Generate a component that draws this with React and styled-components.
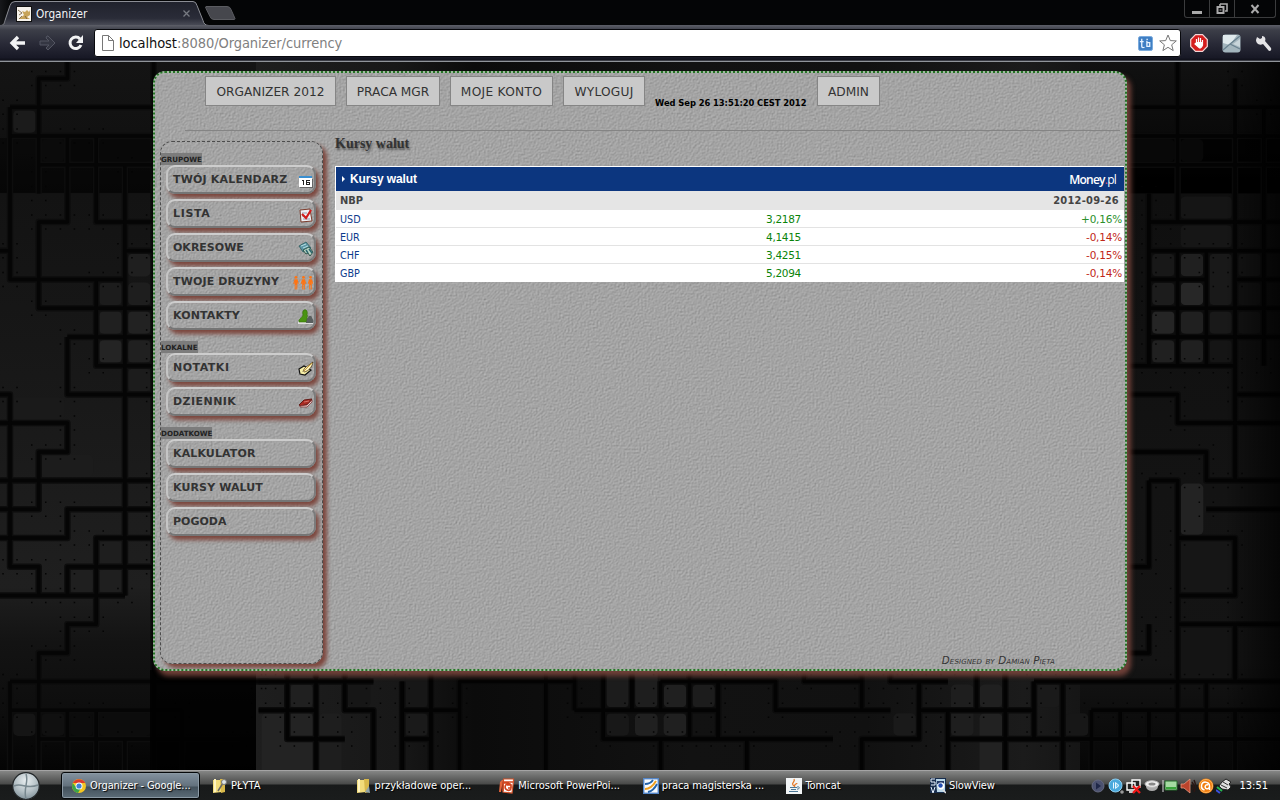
import React from 'react';
import styled, { createGlobalStyle } from 'styled-components';

const verdana = '"DejaVu Sans", Verdana, sans-serif';
const tahoma = '"DejaVu Sans Condensed", Tahoma, sans-serif';

const Global = createGlobalStyle`
  * { box-sizing: border-box; }
  body { margin: 0; background: #000; overflow: hidden; }
`;

const Screen = styled.div`
  display: flex;
  flex-direction: column;
  width: 1280px;
  height: 800px;
  overflow: hidden;
`;

/* ---------- browser chrome ---------- */

const TabStrip = styled.div`
  display: flex;
  justify-content: space-between;
  height: 25px;
  background: linear-gradient(90deg, #17181b 0, #040506 12px, #040506 100%);
`;
const TabArea = styled.div`
  display: grid;
  width: 240px;
  height: 26px;
  & > * { grid-area: 1 / 1; }
`;
const TabContent = styled.div`
  display: flex;
  align-items: center;
  height: 27px;
  padding-left: 16px;
  font: 11.7px ${tahoma};
  color: #f4f4f6;
`;
const TabTitle = styled.span`
  width: 146px;
  margin-left: 4px;
`;
const WindowButtons = styled.div`
  display: flex;
  height: 18px;
  margin-right: 4px;
  border: 1px solid #3b3c3d;
  border-top: 0;
  border-radius: 0 0 3px 3px;
`;
const WindowButton = styled.div`
  display: flex;
  align-items: center;
  justify-content: center;
  width: ${(p) => p.$w}px;
  border-right: ${(p) => (p.$last ? 0 : '1px solid #3b3c3d')};
`;
const Toolbar = styled.div`
  display: flex;
  align-items: center;
  height: 37px;
  padding: 0 8px 0 9px;
  background: linear-gradient(#5d5f68 0, #3c3e48 5px, #2b2c39 17px, #171825 33px, #11121c 34px);
  border-bottom: 1px solid #90949a;
  box-shadow: inset 0 -1px #3a3c44;
`;
const NavIcon = styled.svg`
  margin-right: ${(p) => p.$gap}px;
`;
const Omnibox = styled.div`
  display: flex;
  align-items: center;
  width: 1088px;
  height: 28px;
  padding: 0 3px 0 7px;
  background: #fff;
  border: 1px solid #08090d;
  border-radius: 3px;
  font: 14.5px ${tahoma};
  color: #808080;
`;
const Url = styled.div`
  flex: 1;
  margin-left: 5px;
  letter-spacing: -0.07px;
  b { font-weight: 400; color: #111; }
`;
const Extensions = styled.div`
  display: flex;
  align-items: center;
  margin-left: 9px;
`;

/* ---------- page ---------- */

const Viewport = styled.main`
  display: grid;
  height: 708px;
  overflow: hidden;
  & > * { grid-area: 1 / 1; }
`;
const Panel = styled.div`
  display: grid;
  width: 974px;
  height: 600px;
  margin: 9px 0 0 153px;
  overflow: hidden;
  border: 2px dotted #267326;
  border-radius: 12px;
  background: #a3b8a3;
`;
const PanelShadow = styled.div`
  width: 974px;
  height: 600px;
  margin: 9px 0 0 153px;
  border-radius: 12px;
  box-shadow: 4px 5px 5px #6f4038;
`;
const Texture = styled.svg`
  grid-area: 1 / 1;
`;
const PanelBody = styled.div`
  grid-area: 1 / 1;
  display: flex;
  flex-direction: column;
  z-index: 1;
`;
const Header = styled.header`
  display: flex;
  align-items: flex-start;
  gap: 10px;
  height: 58px;
  margin: 0 5px 0 30px;
  padding: 3px 0 0 20px;
  border-bottom: 1px solid #848484;
`;
const MenuItem = styled.a`
  width: ${(p) => p.$w}px;
  height: 30px;
  border: 1px solid #858585;
  background: #c9c9c9;
  color: #333;
  font: 12.200px/30px ${verdana};
  letter-spacing: ${(p) => p.$ls || 0}px;
  text-align: center;
  white-space: nowrap;
`;
const Clock = styled.span`
  width: 152px;
  padding-top: 21px;
  font: bold 8.400px/12px ${verdana};
  letter-spacing: -0.06px;
  color: #000;
  white-space: nowrap;
`;
const Columns = styled.div`
  display: flex;
  flex: 1;
`;
const Sidebar = styled.aside`
  width: 163px;
  height: 523px;
  margin: 10px 0 0 5px;
  padding-top: 11px;
  border: 1px dashed #4c4c4c;
  border-radius: 12px;
  box-shadow: 4px 4px 4px #7c463d;
`;
const Group = styled.section`
  margin-bottom: 11px;
`;
const GroupTitle = styled.h4`
  width: fit-content;
  height: 12px;
  margin: 0;
  background: #7c7c7c;
  color: #222;
  font: bold 7.100px/13px ${verdana};
`;
const SideButton = styled.a`
  display: flex;
  align-items: center;
  justify-content: space-between;
  width: 150px;
  height: 29px;
  margin: 0 0 5px 5px;
  padding: 0 0 0 5px;
  border: 2px solid;
  border-color: #cdcdcd #7b7b7b #757575 #c5c5c5;
  border-radius: 9px;
  box-shadow: 3px 4px 4px #7c463d;
  color: #333;
  font: bold 11px/15px ${verdana};
  white-space: nowrap;
`;
const SideLabel = styled.span`
  padding-bottom: 1px;
  letter-spacing: ${(p) => p.$ls}px;
`;
const SideIcon = styled.span`
  display: flex;
  padding-top: 3px;
`;
const Content = styled.section`
  display: flex;
  flex-direction: column;
  width: 789px;
  margin-left: 12px;
`;
const Title = styled.h1`
  height: 35px;
  margin: 0;
  padding-top: 4px;
  font: bold 14px/17px "Liberation Serif", serif;
  color: #333;
  text-shadow: 1px 2px 2px #555;
`;
const Rates = styled.div`
  border: 1px solid #fff;
  border-right-width: 0;
  background: #fff;
  font: 10.700px ${tahoma};
`;
const RatesHead = styled.div`
  display: flex;
  align-items: center;
  justify-content: space-between;
  height: 24px;
  padding: 0 8px 0 6px;
  background: #0c367f;
  color: #fff;
  font: bold 12px "Liberation Sans", sans-serif;
`;
const HeadTitle = styled.span`
  display: flex;
  align-items: center;
  gap: 4px;
  letter-spacing: -0.1px;
`;
const Money = styled.span`
  padding-top: 1px;
  font: 600 12px "Open Sans", sans-serif;
  letter-spacing: -0.750px;
  span { font-weight: 400; }
  i { color: #e0556a; font-style: normal; }
`;
const RatesDate = styled.div`
  display: flex;
  justify-content: space-between;
  height: 19px;
  padding: 0 5px 0 4px;
  background: #e5e5e5;
  color: #444;
  font: bold 11px/20px ${tahoma};
  span + span { letter-spacing: 0.250px; }
`;
const Rate = styled.div`
  display: grid;
  grid-template-columns: 389px 72px 1fr;
  height: 18px;
  padding: 0 2px 0 4px;
  border-top: 1px solid #e3e3e3;
  line-height: 19px;
  text-align: right;
  &:nth-child(3) { height: 17px; border-top: 0; }
`;
const Code = styled.span`
  text-align: left;
  color: #0c3b8c;
`;
const Value = styled.span`
  color: #0a830a;
  font-family: ${verdana};
  font-size: 10.500px;
  letter-spacing: -0.3px;
`;
const Change = styled.span`
  color: ${(p) => (p.$up ? '#2b8f2b' : '#bf2718')};
  font-family: ${verdana};
  font-size: 10.500px;
  letter-spacing: -0.2px;
`;
const Footer = styled.footer`
  margin: auto 69px 2px auto;
  font: italic 10.400px/14px ${verdana};
  font-variant: small-caps;
  letter-spacing: 0.120px;
  color: #333;
`;

/* ---------- taskbar ---------- */

const Taskbar = styled.footer`
  display: flex;
  align-items: center;
  height: 30px;
  padding-left: 11px;
  border-top: 1px solid #a4a4a4;
  background: linear-gradient(#858685 0, #686968 6px, #494a49 13px, #181a1a 14px, #1a1c1c 29px);
  color: #fff;
  font: 11px ${tahoma};
`;
const Tasks = styled.div`
  display: flex;
  flex: 1;
  margin-left: 20px;
`;
const Task = styled.div`
  display: flex;
  align-items: center;
  gap: 3px;
  width: ${(p) => (p.$active ? 139 : 143.600)}px;
  height: 27px;
  margin-right: ${(p) => (p.$active ? 2 : 0)}px;
  padding-left: 9px;
  border: 1px solid ${(p) => (p.$active ? '#05080a' : 'transparent')};
  border-radius: 3px;
  background: ${(p) => (p.$active ? 'linear-gradient(#8493a0, #63717d 13px, #43515b 14px, #5c6c78)' : 'none')};
  box-shadow: ${(p) => (p.$active ? 'inset 0 0 0 1px #8b99a4' : 'none')};
  white-space: nowrap;
`;
const TaskLabel = styled.span`
  letter-spacing: ${(p) => p.$ls ?? 0}px;
  text-shadow: 1px 1px 1px #000;
`;
const Tray = styled.div`
  display: flex;
  align-items: center;
  gap: 2px;
  padding-right: 12px;
`;
const Time = styled.span`
  margin-left: 5px;
`;

/* ---------- wallpaper ---------- */

const P = 28.72;
const leftLines = [
  [2, -1, 2, 0, 1, 0, 1, 4], [0, 1, 6, 1], [0, 1, 0, 7, 4, 7], [0, 2, 6, 2], [1, 3, 6, 3],
  [2, 2, 2, 5, 1, 5, 1, 8, 5, 8], [3, 2, 3, 5, 5, 5], [4, 3, 4, 18], [4, 6, 5, 6], [-1, 6, 0, 6],
  [3, 7, 3, 10, 5, 10], [2, 9, 5, 9], [2, 9, 2, 11, 5, 11], [-1, 11, 0, 11, 0, 17, 1, 17, 1, 18],
  [-1, 12, 2, 12, 2, 13, 1, 13, 1, 15, -1, 15], [-1, 14, 5, 14], [-1, 16, 2, 16, 2, 15, 5, 15],
  [-1, 18, 4, 18], [2, 18, 2, 17, 5, 17], [5, 16, 3, 16, 3, 19, 2, 19, 2, 20, 1, 20, 1, 25],
  [0, 21, 9, 21], [0, 21, 0, 25], [0, 22, 6, 22], [1, 23, 8, 23], [2, 22, 2, 25], [3, 22, 3, 25],
  [4, 23, 4, 25], [5, -1, 5, 25], [6, 22, 6, 25],
];
/* columns counted from x = 1034, rows shared with the left side */
const rightLines = [
  [3, 1, 9, 1], [3, 2, 9, 2], [3, 3, 9, 3], [4, 5, 9, 5], [4, 6, 7, 6], [7, 6, 9, 6],
  [4, 7, 6, 7], [7, 7, 9, 7], [4, 8, 9, 8], [4, 9, 9, 9], [3, 10, 7, 10], [7, 11, 9, 11], [3, 11, 5, 11, 5, 12, 9, 12],
  [4, 4, 4, 10], [5, -1, 5, 5], [5, 6, 5, 10], [6, 6, 6, 10], [7, 0, 7, 14], [8, 1, 8, 10],
  [3, 13, 6, 13, 6, 14, 9, 14], [4, 14, 5, 14, 5, 19, 9, 19], [4, 14, 4, 17, 3, 17], [6, 15, 9, 15, 9, 16],
  [5, 16, 7, 16, 7, 18, 5, 18], [4, 19, 4, 20, 3, 20], [5, 21, 5, 19, 7, 19, 7, 21],
  [0, 21, 9, 21], [0, 21, 0, 23, 9, 23], [1, 21, 1, 25], [2, 22, 9, 22], [2, 22, 2, 25],
  [3, 22, 3, 25], [5, 21, 5, 25], [6, 21, 6, 25], [4, 22, 4, 25], [7, 22, 7, 25],
  [0, 22, -4, 22, -4, 21, -5, 21, -5, 20], [-1, 20, -1, 25], [-2, 20, -2, 22], [-3, 22, -3, 23, 1, 23],
  [-4, 22, -4, 23, -6, 23, -6, 25], [-3, 22, -3, 25], [-5, 21, -3, 21], [-6, 20, -6, 22, -5, 22],
  [-8, 20, -8, 21, -6, 21], [-13, 21, -9, 21, -9, 22, -6, 22], [-11, 21, -11, 23], [-12, 20, -12, 23],
  [-13, 21, -13, 22], [-14, 20, -14, 22], [-15, 20, -15, 23, -7, 23], [-16, 22, -11, 22],
  [-17, 20, -17, 25], [-16, 20, -16, 22], [-10, 23, -10, 25], [-13, 23, -13, 25],
  [-20, 25, -20, 21, -16, 21], [-21, 20, -21, 25], [-22, 21, -22, 25], [-24, 20, -24, 22, -23, 22, -23, 25],
  [-25, 20, -25, 25], [-26, 20, -26, 22], [-27, 21, -23, 21], [-22, 22, -20, 22], [-27, 22, -25, 22],
  [-26, 22, -26, 23, -24, 23], [-22, 23, -21, 23],
];
const toPath = (ox) => (pts) => {
  let d = '';
  for (let i = 0; i < pts.length; i += 2) {
    d += `${i ? 'L' : 'M'}${(ox + pts[i] * P).toFixed(1)} ${(16.5 + pts[i + 1] * P).toFixed(1)}`;
  }
  return d;
};
/* rivets sit on the four sides of every bend or line end */
const toRivets = (ox) => (pts) => {
  let d = '';
  for (let i = 0; i < pts.length; i += 2) {
    const x = ox + pts[i] * P;
    const y = 16.5 + pts[i + 1] * P;
    [[-7, -7], [7, -7], [-7, 7], [7, 7]].forEach(([dx, dy]) => {
      d += `M${(x + dx - 0.7).toFixed(1)} ${(y + dy).toFixed(1)}h1.5`;
    });
  }
  return d;
};
const leftPath = leftLines.map(toPath(10)).join('');
const rightPath = rightLines.map(toPath(1034)).join('');
const rivets = leftLines.map(toRivets(10)).join('') + rightLines.map(toRivets(1034)).join('');

const cell = (ox, c, r, w, h, fill) => (
  <rect key={`${ox}-${c}-${r}`} x={ox + c * P + 3} y={16.5 + r * P + 3} width={w * P - 6} height={h * P - 6} rx="5" fill={fill} />
);
const leftCells = [
  [0, 1, 1, 1, '#1b1b1b'], [1, 2, 1, 1, '#131313'], [2, 2, 1, 1, '#0d0d0d'], [3, 2, 2, 1, '#0e0e0e'],
  [4, 6, 1, 1, '#1f1f1f'], [3, 7, 1, 1, '#1c1c1c'], [4, 7, 1, 1, '#1e1e1e'], [3, 8, 1, 1, '#202020'], [4, 8, 1, 1, '#222'],
  [3, 9, 1, 1, '#242424'], [4, 9, 1, 1, '#202020'], [4, 10, 1, 1, '#1c1c1c'],
  [0, 11, 2, 1, '#1a1a1a'], [1, 13, 2, 1, '#1c1c1c'], [2, 17, 1, 1, '#1f1f1f'], [3, 17, 1, 1, '#1f1f1f'], [3, 16, 1, 1, '#1e1e1e'],
  [0, 22, 1, 1, '#151515'], [1, 22, 1, 1, '#101010'], [2, 22, 1, 1, '#0c0c0c'], [3, 22, 2, 1, '#0c0c0c'],
];
const rightCells = [
  [3, 2, 2, 1, '#1c1c1c'], [5, 2, 1, 1, '#1c1c1c'], [5, 5, 2, 1, '#161616'], [5, 4, 2, 1, '#151515'],
  [4, 6, 1, 1, '#181818'], [5, 6, 1, 1, '#202020'], [6, 6, 1, 2, '#191919'], [7, 6, 1, 1, '#151515'],
  [4, 7, 1, 1, '#1c1c1c'], [5, 7, 1, 1, '#272727'], [7, 7, 1, 1, '#131313'], [4, 8, 1, 1, '#252525'], [5, 8, 1, 1, '#202020'],
  [6, 8, 1, 1, '#191919'], [7, 8, 1, 1, '#141414'], [4, 9, 1, 1, '#202020'], [5, 9, 1, 1, '#202020'], [6, 9, 1, 1, '#151515'],
  [5, 14, 1, 2, '#232323'], [5, 16, 2, 2, '#161616'], [5, 19, 2, 2, '#141414'],
  [0, 21, 1, 1, '#1a1a1a'], [1, 22, 1, 1, '#171717'], [-2, 21, 1, 1, '#202020'], [-2, 22, 1, 3, '#222'],
  [-3, 21, 1, 2, '#1e1e1e'], [-5, 22, 1, 1, '#1a1a1a'], [-12, 21, 1, 1, '#1c1c1c'], [-13, 21, 1, 1, '#202020'],
  [-13, 22, 1, 1, '#202020'], [-14, 22, 1, 1, '#202020'], [-15, 22, 1, 1, '#181818'], [-14, 20, 1, 2, '#1e1e1e'],
  [-15, 20, 1, 2, '#1c1c1c'], [-24, 20, 1, 2, '#161616'], [-26, 21, 1, 1, '#202020'], [-26, 22, 1, 1, '#262626'],
  [-25, 22, 1, 3, '#1e1e1e'], [-27, 22, 2, 3, '#232323'], [-22, 20, 1, 2, '#171717'], [-22, 22, 1, 1, '#1a1a1a'],
];

const Wallpaper = () => (
  <svg width="1280" height="708" viewBox="0 0 1280 708">
    <defs>
      <linearGradient id="lg" x1="0" y1="0" x2="0" y2="1">
        <stop offset="0" stopColor="#141414" /><stop offset=".1" stopColor="#111" /><stop offset=".184" stopColor="#0b0b0b" />
        <stop offset=".186" stopColor="#131313" /><stop offset=".4" stopColor="#171717" /><stop offset=".74" stopColor="#1f1f1f" />
        <stop offset=".82" stopColor="#131313" /><stop offset=".92" stopColor="#0d0d0d" /><stop offset="1" stopColor="#040404" />
      </linearGradient>
      <linearGradient id="rg" x1="0" y1="0" x2="0" y2="1">
        <stop offset="0" stopColor="#111" /><stop offset=".1" stopColor="#0a0a0a" /><stop offset=".184" stopColor="#010101" />
        <stop offset=".187" stopColor="#0f0f0f" /><stop offset=".6" stopColor="#131313" /><stop offset=".85" stopColor="#141414" />
        <stop offset="1" stopColor="#060606" />
      </linearGradient>
      <linearGradient id="bg" x1="0" x2="1" y1="0" y2="0">
        <stop offset="0" stopColor="#1e1e1e" /><stop offset=".16" stopColor="#181818" /><stop offset=".25" stopColor="#0b0b0b" />
        <stop offset=".5" stopColor="#121212" /><stop offset=".7" stopColor="#111" /><stop offset=".88" stopColor="#1b1b1b" /><stop offset="1" stopColor="#111" />
      </linearGradient>
      <linearGradient id="fade" x1="0" x2="1" y1="0" y2="0">
        <stop offset="0" stopOpacity="0" /><stop offset="1" stopOpacity=".7" />
      </linearGradient>
    </defs>
    <rect width="256" height="708" fill="url(#lg)" />
    <rect x="256" width="872" height="708" fill="url(#bg)" />
    <rect x="1080" width="200" height="708" fill="url(#rg)" />
    {leftCells.map((c) => cell(10, ...c))}
    {rightCells.map((c) => cell(1034, ...c))}
    <rect y="76" width="153" height="55" fill="#000" opacity=".4" />
    <rect x="1120" y="76" width="160" height="55" fill="#000" opacity=".7" />
    <g fill="none" strokeLinejoin="round">
      <path d={rivets} stroke="#040404" strokeWidth="1.5" />
      <path d={leftPath} stroke="#0d0d0d" strokeWidth="6.5" />
      <path d={leftPath} stroke="#050505" strokeWidth="3.5" />
      <path d={rightPath} stroke="#0b0b0b" strokeWidth="6.5" />
      <path d={rightPath} stroke="#030303" strokeWidth="3.5" />
    </g>
    <rect x="150" y="608" width="106" height="100" fill="#000" opacity=".8" />
    <rect x="1225" width="55" height="708" fill="url(#fade)" />
  </svg>
);

/* ---------- icons ---------- */

const CatIcon = () => (
  <svg width="16" height="16" viewBox="0 0 16 16">
    <rect width="16" height="16" fill="#111" /><rect x="1" y="1" width="14" height="14" fill="#f7f3ec" />
    <path d="M3 13 8 9 6 5l3 1 2-2 2 2 1-2v5l-3 2 3 2z" fill="#c8a45a" />
    <path d="M2 4l4 3-3 2M6 10l-3 3M9 10l2 3" stroke="#6e5535" strokeWidth=".8" fill="none" />
  </svg>
);
const CalendarIcon = () => (
  <svg width="16" height="16" viewBox="0 0 16 16" shapeRendering="crispEdges">
    <path d="M2 6h13v9H2z" fill="#666" /><path d="M1 4h13v10H1z" fill="#fff" />
    <path d="M1 3h13v2H1z" fill="#3a8fd0" />
    <path d="M5.500 7v5M4 7.500h1M12 7.500H8.500v4H11.500V9.500H9" stroke="#222" fill="none" />
  </svg>
);
const ListIcon = () => (
  <svg width="16" height="16" viewBox="0 0 16 16">
    <path d="m2 3 10-1 2 12-11 1z" fill="#eef0f5" stroke="#7c3b2b" /><path d="M4 6h5M4 9h3M5 12h7" stroke="#99a" />
    <path d="m4 7 4 4 5-8" fill="none" stroke="#d01c1c" strokeWidth="2.2" />
  </svg>
);
const PeriodIcon = () => (
  <svg width="16" height="16" viewBox="0 0 16 16">
    <path d="m1 5 7-4 5 6-8 4z" fill="#5d96a6" stroke="#255" strokeWidth=".7" /><path d="m3 5 5-2M5 7l5-2" stroke="#b5dee0" />
    <path d="m5 9 6-3 4 5-3 4-2-3-2 1z" fill="#b8d4c4" stroke="#143d33" strokeWidth=".8" /><path d="m8 9 2 3m1-4 3 4" stroke="#2d6770" strokeWidth="1.5" />
  </svg>
);
const Person = ({ x }) => (
  <g transform={`translate(${x} 0)`}>
    <circle cx="3" cy="2.3" r="1.4" /><path d="M1.500 4.200h3l1.200 4.600-.8.300-.6-2v7.400H3.300V10h-.6v4.500h-1V7.100l-.6 2-.8-.3z" />
  </g>
);
const TeamIcon = () => (
  <svg width="21" height="16" viewBox="0 0 21 16" fill="#ff7413"><Person x={0} /><Person x={7.5} /><Person x={14.5} /></svg>
);
const ContactsIcon = () => (
  <svg width="16" height="18" viewBox="0 0 16 18">
    <path d="M0 13h15v3H0z" fill="#dedede" /><path d="M8 15c0-4 1-5 2-5 0-3 4-3 4 0 1 1 2 3 1 5z" fill="#5a5f5f" />
    <path d="M1 14c-1-3 3-4 4-7-2-7 6-7 4 0 1 0 0 2 0 3l-1 4z" fill="#4a9411" stroke="#326f08" strokeWidth=".6" />
  </svg>
);
const NotesIcon = () => (
  <svg width="16" height="16" viewBox="0 0 16 16">
    <path d="m1 8 5-3 7 4-6 5-5-1z" fill="#f8f0a8" stroke="#111" strokeWidth="1.2" />
    <path d="M5 11c1-5 5-6 10-10-1 5-4 9-9 10" fill="#fff4c0" stroke="#3b2200" strokeWidth=".7" /><path d="m6 10 8-8" stroke="#c9a038" />
  </svg>
);
const DiaryIcon = () => (
  <svg width="16" height="16" viewBox="0 0 16 16">
    <path d="M1 10 6 5l8-1-4 5-7 2z" fill="#a92b22" stroke="#641b18" /><path d="m2 11 7-1 5-5v2l-5 5-7 0z" fill="#e4cdcd" stroke="#7c2a26" strokeWidth=".7" /><path d="m6 7 5-1" stroke="#d77066" />
  </svg>
);
const FolderIcon = ({ tool }) => (
  <svg width="16" height="16" viewBox="0 0 16 16">
    <path d="M1 2h8l1 12-9 1z" fill="#f2dc7b" /><path d="M8 1h5v13l-4 1z" fill="#d9b94b" /><path d="M3 1v13" stroke="#fff4bf" strokeWidth="2" />
    {tool ? <><path d="m6 13 5-8" stroke="#666" strokeWidth="1.5" /><circle cx="12" cy="4" r="2.5" fill="#dde4e8" stroke="#777" /></> : <path d="M13 8l1 7-5-1z" fill="#8fa2a8" />}
  </svg>
);
const ChromeIcon = () => (
  <svg width="16" height="16" viewBox="0 0 16 16">
    <circle cx="8" cy="8" r="7" fill="#f4c522" /><path d="M1.8 5a7 7 0 0 1 12.5 0H8z" fill="#dc3d2e" /><path d="M1.8 5A7 7 0 0 0 7 15l3.5-6L4 8z" fill="#3da548" />
    <circle cx="8" cy="8" r="3.5" fill="#fff" /><circle cx="8" cy="8" r="2.6" fill="#4182d6" />
  </svg>
);
const PptIcon = () => (
  <svg width="16" height="16" viewBox="0 0 16 16">
    <path d="M4.5 1h10v2L13 15l-9-1z" fill="#fff" stroke="#d4542b" strokeWidth="1.2" /><path d="M1 4l2-2h1L2 14H0z" fill="#e4633a" />
    <path d="M4 4h10M4 13V5h6" stroke="#d2451e" fill="none" strokeWidth="1.3" /><path d="M12 7a3.3 3.3 0 1 0 0 4M8 7h4v3H9" fill="none" stroke="#d2451e" strokeWidth="1.7" />
  </svg>
);
const WriterIcon = () => (
  <svg width="16" height="16" viewBox="0 0 16 16">
    <rect x=".7" y=".7" width="14.6" height="14.6" fill="#f7fbff" stroke="#5486c8" strokeWidth="1.4" />
    <path d="M2 6c4 0 6-1 8-4M5 14c5-1 7-4 9-8" stroke="#2462a9" strokeWidth="1.8" fill="none" /><path d="M2 11c5 0 8-3 11-8" stroke="#f0a020" strokeWidth="2" fill="none" />
  </svg>
);
const JavaIcon = () => (
  <svg width="16" height="16" viewBox="0 0 16 16">
    <rect width="16" height="16" fill="#f1f4f5" /><path d="M8 8c-4-3 2-4 0-7m1 8c-2-2 2-3 2-4" stroke="#e57928" fill="none" strokeWidth="1.3" />
    <path d="M4 9.5h7M5 11.5h5M3 13.5h9M11 9c4-1 2 3 0 2" stroke="#4c7795" fill="none" />
  </svg>
);
const SlowIcon = () => (
  <svg width="16" height="16" viewBox="0 0 16 16">
    <rect width="16" height="15" fill="#182d4d" /><path d="M5 1H1v3h4v3H1M1 9l2 6 2-6" stroke="#e7f2ff" fill="none" />
    <path d="M6 1h9v13H7z" fill="#b9d6e8" /><path d="M7 3h7v3H7z" fill="#243a68" /><circle cx="11" cy="8" r="3.4" fill="#fff" /><circle cx="10.5" cy="7.5" r="2.2" fill="#244eb0" /><path d="m13 12 3 3" stroke="#ddd" strokeWidth="1.5" />
  </svg>
);

const TrayIcons = () => (
  <>
    <svg width="16" height="16" viewBox="0 0 16 16"><circle cx="8" cy="8" r="6" fill="#4c5270" stroke="#656980" /><path d="m6 4.5 5 3.500-5 3.500z" fill="#1f2748" /></svg>
    <svg width="16" height="16" viewBox="0 0 16 16"><circle cx="7.5" cy="7.5" r="6.5" fill="#4aa9dc" stroke="#8fd0f2" /><path d="M5.500 4.500v6M7.500 4.500l3.500 3-3.500 3z" stroke="#e8f7ff" fill="#7cc9ee" /><circle cx="14" cy="14" r="1.8" fill="#999" /></svg>
    <svg width="16" height="16" viewBox="0 0 16 16"><path d="M6 2h8v7H6zM1 5h8v7H1zM3 14h5" fill="#222" stroke="#fff" strokeWidth="1.4" /><path d="m7 8 7 7m0-7-7 7" stroke="#f01818" strokeWidth="2.4" /></svg>
    <svg width="16" height="16" viewBox="0 0 16 16"><ellipse cx="8" cy="8.5" rx="6" ry="4.5" fill="#aaa" /><ellipse cx="8" cy="6" rx="7" ry="3.3" fill="#eee" stroke="#bbb" /><ellipse cx="8" cy="6" rx="3.5" ry="1.5" fill="#888" /></svg>
    <svg width="16" height="16" viewBox="0 0 16 16"><path d="M1 2v12" stroke="#ddd" /><path d="M3 3h12v9H3z" fill="#a5dba2" stroke="#276b2c" /><path d="M4 9h10v2H4z" fill="#38a53a" /></svg>
    <svg width="16" height="16" viewBox="0 0 16 16"><path d="M1 6h3l6-5v14l-6-5H1z" fill="#ba432c" stroke="#e7977c" strokeWidth=".8" /><path d="M12 4q3 4 0 8m2-10q3 6 0 12" fill="none" stroke="#2a1714" strokeWidth="1.5" /></svg>
    <svg width="16" height="16" viewBox="0 0 16 16"><circle cx="8" cy="8" r="7.5" fill="#f07d10" /><circle cx="8" cy="8" r="6.5" fill="none" stroke="#ffb860" /><path d="M6.500 12a4 4 0 1 1 5-4v4M11 9.500a2 2 0 1 1-1-2.500" fill="none" stroke="#fff" strokeWidth="1.5" /></svg>
    <svg width="16" height="16" viewBox="0 0 16 16"><path d="m6 4 4-3 5 3-2 2 2 3-3 3-6-1-3-3z" fill="#ddd" stroke="#222" strokeWidth="1" /><path d="m7 4 5 3m-7 0 6 3" stroke="#333" /><path d="m1 9 5 4" stroke="#28b653" strokeWidth="2" /><path d="m0 12 4 3" stroke="#3a50e0" strokeWidth="2" /></svg>
  </>
);

const Orb = () => (
  <svg width="30" height="28" viewBox="0 0 30 28">
    <defs><radialGradient id="orb" cx=".5" cy=".3" r=".7"><stop offset="0" stopColor="#e8eef0" /><stop offset=".6" stopColor="#b4c0c5" /><stop offset="1" stopColor="#84949c" /></radialGradient></defs>
    <circle cx="15" cy="14" r="13.3" fill="url(#orb)" stroke="#222628" strokeWidth="1.3" />
    <path d="M3 14c8-4 12 4 24-1M15 2c3 8-3 14 0 25" fill="none" stroke="#78888f" strokeWidth="1.5" />
  </svg>
);

const sections = [
  {
    title: 'GRUPOWE',
    items: [
      ['TWÓJ KALENDARZ', 0.19, CalendarIcon], ['LISTA', 0.65, ListIcon], ['OKRESOWE', 0, PeriodIcon],
      ['TWOJE DRUZYNY', 0.15, TeamIcon], ['KONTAKTY', 0.15, ContactsIcon],
    ],
  },
  { title: 'LOKALNE', items: [['NOTATKI', 0.5, NotesIcon], ['DZIENNIK', 0.45, DiaryIcon]] },
  { title: 'DODATKOWE', items: [['KALKULATOR', 0.12], ['KURSY WALUT', 0.12], ['POGODA', 0]] },
];
const rates = [['USD', '3,2187', '+0,16%'], ['EUR', '4,1415', '-0,14%'], ['CHF', '3,4251', '-0,15%'], ['GBP', '5,2094', '-0,14%']];

const StoneTexture = () => (
  <Texture width="970" height="596">
    <filter id="stone" x="0" y="0" width="100%" height="100%" colorInterpolationFilters="sRGB">
      <feTurbulence type="fractalNoise" baseFrequency="0.56" numOctaves="2" seed="7" result="n" />
      <feDiffuseLighting in="n" surfaceScale="0.4" diffuseConstant="0.775" lightingColor="#ffffff">
        <feDistantLight azimuth="225" elevation="56" />
      </feDiffuseLighting>
    </filter>
    <rect width="970" height="596" filter="url(#stone)" />
  </Texture>
);

export default function App() {
  return (
    <Screen>
      <Global />
      <TabStrip>
        <TabArea>
          <svg width="240" height="26" viewBox="0 0 240 26">
            <defs><linearGradient id="tab" x1="0" y1="0" x2="0" y2="1"><stop offset="0" stopColor="#20222c" /><stop offset=".7" stopColor="#2a2c38" /><stop offset="1" stopColor="#4b4d58" /></linearGradient></defs>
            <path d="M0 25.500c4 0 4-2 5-5l5-15q1-4 5-4h178q3 0 4 4l6 15q1 5 6 5z" fill="url(#tab)" />
            <path d="M0 25.500c4 0 4-2 5-5l5-15q1-4 5-4h178q3 0 4 4l6 15q1 5 6 5" fill="none" stroke="#8b8d94" />
            <path d="M206 6.500h21q3 0 4 3l4 9q0 1-1 1h-20q-3 0-4-3l-4-8q-1-2 0-2z" fill="#46474d" stroke="#5b5c61" />
          </svg>
          <TabContent>
            <CatIcon />
            <TabTitle>Organizer</TabTitle>
            <svg width="9" height="9" viewBox="0 0 9 9"><path d="m1.5 1.5 6 6m0-6-6 6" stroke="#777a82" strokeWidth="1.3" /></svg>
          </TabContent>
        </TabArea>
        <WindowButtons>
          <WindowButton $w={25}><svg width="10" height="12"><path d="M0 9.5h10" stroke="#aaa" strokeWidth="3" /></svg></WindowButton>
          <WindowButton $w={25}><svg width="12" height="12" viewBox="0 0 12 12" fill="none" stroke="#aaa"><path d="M4 1h7v7H9M4 1v2" strokeWidth="1.6" /><path d="M1.5 4h6v6h-6z" strokeWidth="2" /><path d="M3.500 7h2" /></svg></WindowButton>
          <WindowButton $w={40} $last><svg width="10" height="10" viewBox="0 0 10 10"><path d="m1.5 1 7 8m0-8-7 8" stroke="#aaa" strokeWidth="2" /></svg></WindowButton>
        </WindowButtons>
      </TabStrip>

      <Toolbar>
        <NavIcon $gap={13} width="17" height="16" viewBox="0 0 17 16"><path d="M9 2 3 8l6 6M3 8h13" fill="none" stroke="#f2f3f4" strokeWidth="3.3" /></NavIcon>
        <NavIcon $gap={12} width="17" height="16" viewBox="0 0 17 16"><path d="m8 1-1 2 3 3H1v4h9l-3 3 2 2 7-7-7-7z" fill="#343642" stroke="#555763" /></NavIcon>
        <NavIcon $gap={10} width="16" height="17" viewBox="0 0 16 17"><path d="M13 10a5.700 5.700 0 1 1-1-6" fill="none" stroke="#f2f3f4" strokeWidth="3" /><path d="M15 0v8H8z" fill="#f2f3f4" /></NavIcon>
        <Omnibox>
          <svg width="12" height="16" viewBox="0 0 12 16"><path d="M.5.5h6l5 5v10H.5zM6.500.5v5h5" fill="#fff" stroke="#777" /></svg>
          <Url><b>localhost</b>:8080/Organizer/currency</Url>
          <NavIcon $gap={5} width="15" height="15" viewBox="0 0 16 16"><rect x=".5" y=".5" width="15" height="15" rx="2" fill="#3f7fc4" stroke="#77a9dc" /><path d="M4 3v8q0 2 3 1M2 6h4M9 3.500h1.500M9.500 7h3v4h-3zV5" fill="none" stroke="#e6f2ff" strokeWidth="1.4" /></NavIcon>
          <svg width="19" height="18" viewBox="0 0 19 18"><path d="m10 1 2.300 5.600 6 .3-4.600 3.900 1.500 5.800-5.200-3.300-5.100 3.300 1.500-5.800L1.700 6.900l6-.3z" fill="#fff" stroke="#777" /></svg>
        </Omnibox>
        <Extensions>
          <NavIcon $gap={14} width="18" height="18" viewBox="0 0 18 18"><path d="M5.500.7h7l4.800 4.800v7l-4.800 4.800h-7L.7 12.500v-7z" fill="#d51d1d" stroke="#f5d5d5" strokeWidth="1.2" /><path d="M6.500 9V5M8.500 9V3.500M10.500 9V4M12.500 9V6M6.500 8.500h6V11q-1 3-3 3L5 10z" stroke="#fff" fill="#fff" strokeWidth="1.2" /></NavIcon>
          <NavIcon $gap={14} width="19" height="19" viewBox="0 0 19 19"><rect x=".5" y=".5" width="18" height="18" rx="3" fill="#a3b5bd" /><path d="M1 1h14L8 11 1 9z" fill="#dfe9ec" /><path d="m1 16 7-6 10-8M8 10l10 5" stroke="#6a8290" strokeWidth="1.2" /><path d="m11 10 7-5v8z" fill="#c8d5da" /></NavIcon>
          <svg width="17" height="17" viewBox="0 0 17 17"><path d="M1 5 2 2l3 2 2-1V1c3 0 4 3 3 5l6 7q1 3-2 3L8 9C4 11 1 8 1 5z" fill="#e4e4e6" /></svg>
        </Extensions>
      </Toolbar>

      <Viewport>
        <Wallpaper />
        <PanelShadow />
        <Panel>
          <StoneTexture />
          <PanelBody>
            <Header>
              <MenuItem $w={131}>ORGANIZER 2012</MenuItem>
              <MenuItem $w={94}>PRACA MGR</MenuItem>
              <MenuItem $w={103} $ls={0.3}>MOJE KONTO</MenuItem>
              <MenuItem $w={82} $ls={0.25}>WYLOGUJ</MenuItem>
              <Clock>Wed Sep 26 13:51:20 CEST 2012</Clock>
              <MenuItem $w={63}>ADMIN</MenuItem>
            </Header>
            <Columns>
              <Sidebar>
                {sections.map((s) => (
                  <Group key={s.title}>
                    <GroupTitle>{s.title}</GroupTitle>
                    {s.items.map(([label, spacing, Icon]) => (
                      <SideButton key={label}>
                        <SideLabel $ls={spacing}>{label}</SideLabel>
                        {Icon && <SideIcon><Icon /></SideIcon>}
                      </SideButton>
                    ))}
                  </Group>
                ))}
              </Sidebar>
              <Content>
                <Title>Kursy walut</Title>
                <Rates>
                  <RatesHead>
                    <HeadTitle><svg width="4" height="6"><path d="m0 0 3 3-3 3z" fill="#fff" /></svg>Kursy walut</HeadTitle>
                    <Money>Money<span><i>.</i>pl</span></Money>
                  </RatesHead>
                  <RatesDate><span>NBP</span><span>2012-09-26</span></RatesDate>
                  {rates.map(([code, value, change]) => (
                    <Rate key={code}>
                      <Code>{code}</Code><Value>{value}</Value><Change $up={change[0] === '+'}>{change}</Change>
                    </Rate>
                  ))}
                </Rates>
                <Footer>Designed by Damian Pięta</Footer>
              </Content>
            </Columns>
          </PanelBody>
        </Panel>
      </Viewport>

      <Taskbar>
        <Orb />
        <Tasks>
          <Task $active><ChromeIcon /><TaskLabel $ls={-0.1}>Organizer - Google...</TaskLabel></Task>
          <Task><FolderIcon tool /><TaskLabel>PŁYTA</TaskLabel></Task>
          <Task><FolderIcon /><TaskLabel>przykładowe oper...</TaskLabel></Task>
          <Task><PptIcon /><TaskLabel>Microsoft PowerPoi...</TaskLabel></Task>
          <Task><WriterIcon /><TaskLabel $ls={-0.1}>praca magisterska ...</TaskLabel></Task>
          <Task><JavaIcon /><TaskLabel>Tomcat</TaskLabel></Task>
          <Task><SlowIcon /><TaskLabel $ls={-0.1}>SlowView</TaskLabel></Task>
        </Tasks>
        <Tray><TrayIcons /><Time>13:51</Time></Tray>
      </Taskbar>
    </Screen>
  );
}
